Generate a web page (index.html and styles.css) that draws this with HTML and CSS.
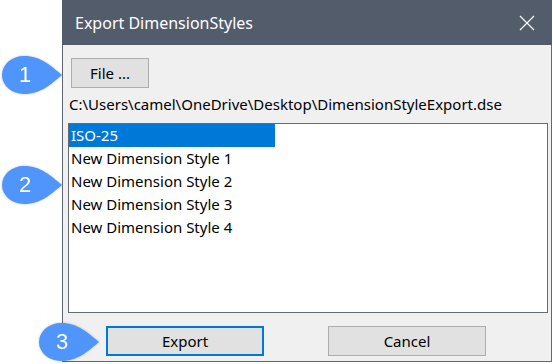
FILE: index.html
```html
<!DOCTYPE html>
<html lang="en">
<head>
    <meta name="viewport" content="width=device-width, initial-scale=1.0">
    <title>Export DimensionStyles</title>
    <link rel="stylesheet" href="styles.css">
</head>
<body>
    <div class="page">
        <div class="dialog">
            <div class="titlebar">
                <span class="title">Export DimensionStyles</span>
                <svg class="close" width="16" height="16" viewBox="0 0 16 16">
                    <path d="M1 1 L15 15 M15 1 L1 15" stroke="#fff" stroke-width="1.2" fill="none"/>
                </svg>
            </div>
            <div class="content">
                <button class="btn file-btn">File ...</button>
                <p class="path">C:\Users\camel\OneDrive\Desktop\DimensionStyleExport.dse</p>
                <ul class="list">
                    <li class="selected">ISO-25</li>
                    <li>New Dimension Style 1</li>
                    <li>New Dimension Style 2</li>
                    <li>New Dimension Style 3</li>
                    <li>New Dimension Style 4</li>
                </ul>
                <div class="actions">
                    <button class="btn btn-wide default">Export</button>
                    <button class="btn btn-wide">Cancel</button>
                </div>
            </div>
        </div>

        <!-- callout markers -->
        <div class="callout c1">
            <svg width="62" height="40" viewBox="0 0 62 40"><path d="M23 1 C40 1 50 11 61 20 C50 29 40 39 23 39 A22 19 0 0 1 23 1 Z"/></svg>
            <span>1</span>
        </div>
        <div class="callout c2">
            <svg width="62" height="40" viewBox="0 0 62 40"><path d="M23 1 C40 1 50 11 61 20 C50 29 40 39 23 39 A22 19 0 0 1 23 1 Z"/></svg>
            <span>2</span>
        </div>
        <div class="callout c3">
            <svg width="62" height="40" viewBox="0 0 62 40"><path d="M23 1 C40 1 50 11 61 20 C50 29 40 39 23 39 A22 19 0 0 1 23 1 Z"/></svg>
            <span>3</span>
        </div>
    </div>
</body>
</html>
```

FILE: styles.css
```css
*{
    margin: 0;
    padding: 0;
    box-sizing: border-box;
    font-family: 'Noto Sans', sans-serif;
}
body{
    background: #fff;
    width: 553px;
    height: 364px;
    overflow: hidden;
}
.page{
    position: relative;
    height: 364px;
}
.dialog{
    margin-left: 62px;
    width: 490px;
    height: 362px;
    background: #f0f0f0;
    border: 1px solid #5f6876;
    border-top: 0;
    display: flex;
    flex-direction: column;
}
.titlebar{
    height: 45px;
    margin: 0 -1px;
    background: #525c6b;
    color: #fff;
    display: flex;
    align-items: center;
    justify-content: space-between;
    padding: 0 17px 0 13px;
}
.title{
    font-size: 16px;
}
.close{
    display: block;
}
.content{
    flex: 1;
    display: flex;
    flex-direction: column;
    align-items: flex-start;
    padding: 0 3px 5px 5px;
}
.btn{
    background: #e1e1e1;
    border: 1px solid #adadad;
    color: #000;
    font-size: 15px;
    height: 30px;
    cursor: pointer;
}
.file-btn{
    width: 78px;
    margin: 13px 0 0 3px;
}
.path{
    font-size: 15px;
    line-height: 20px;
    margin: 6px 0 0 1px;
    color: #000;
}
.list{
    list-style: none;
    width: 480px;
    height: 190px;
    margin-top: 9px;
    background: #fff;
    border: 1px solid #646b74;
}
.list li{
    width: 206px;
    height: 23px;
    line-height: 23px;
    font-size: 15px;
    padding-left: 2px;
    color: #000;
    white-space: nowrap;
}
.list li.selected{
    background: #0078d7;
    color: #fff;
}
.actions{
    display: flex;
    gap: 64px;
    margin-top: 13px;
    padding-left: 38px;
}
.btn-wide{
    width: 158px;
}
.btn.default{
    border: 2px solid #0078d7;
}
.callout{
    position: absolute;
    width: 62px;
    height: 40px;
    filter: drop-shadow(0 0 1px rgba(0, 0, 0, 0.25));
}
.callout svg{
    display: block;
    fill: #4f95fb;
}
.callout span{
    position: absolute;
    left: 0;
    top: 0;
    width: 48px;
    line-height: 40px;
    text-align: center;
    color: #fff;
    font-family: 'Liberation Sans', sans-serif;
    font-size: 22px;
}
.c1{
    left: 1px;
    top: 55px;
}
.c2{
    left: 1px;
    top: 165px;
}
.c3{
    left: 38px;
    top: 322px;
}
```
